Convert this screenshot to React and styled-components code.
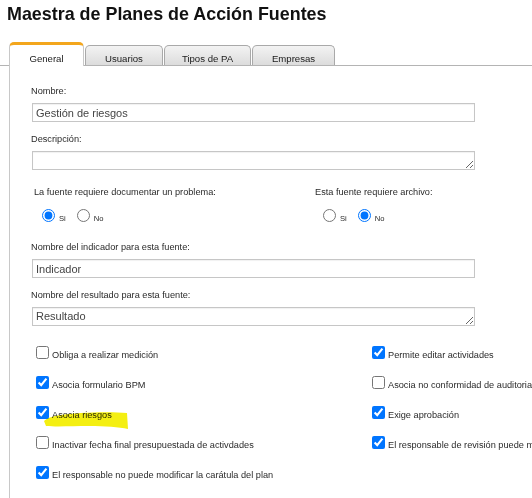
import React from 'react';
import styled, { createGlobalStyle } from 'styled-components';

const GlobalStyle = createGlobalStyle`
  html, body {
    margin: 0;
    padding: 0;
    background: #fff;
    overflow: hidden;
  }
  body {
    font-family: "Liberation Sans", Arial, sans-serif;
    color: #222;
  }
`;

const Page = styled.div`
  width: 720px;
`;

const Title = styled.h1`
  margin: 0;
  padding: 3px 7px 0;
  font-size: 17.9px;
  line-height: 22px;
  font-weight: bold;
  color: #111;
`;

const TabBar = styled.div`
  display: flex;
  align-items: flex-end;
  gap: 1px;
  margin-top: 17px;
  padding-left: 9px;
  border-bottom: 1px solid #b4b4b4;
`;

const Tab = styled.div`
  box-sizing: border-box;
  width: ${p => p.$w}px;
  height: ${p => (p.$active ? 24 : 20)}px;
  margin-bottom: ${p => (p.$active ? -1 : 0)}px;
  padding-top: ${p => (p.$active ? 8 : 7)}px;
  text-align: center;
  font-size: 9.6px;
  line-height: 11px;
  color: #1a1a1a;
  background: ${p => (p.$active ? '#fff' : 'linear-gradient(#f3f3f3, #dcdcdc)')};
  border: 1px solid ${p => (p.$active ? '#c8c8c8' : '#a9a9a9')};
  border-bottom: none;
  border-top: ${p => (p.$active ? '3px solid #f3a61d' : '1px solid #a9a9a9')};
  border-radius: 5px 5px 0 0;
`;

const Panel = styled.div`
  margin-left: 9px;
  border-left: 1px solid #c8c8c8;
  padding: 20px 0 80px 21px;
`;

const Field = styled.div`
  margin-bottom: ${p => p.$mb ?? 12}px;
`;

const Label = styled.div`
  font-size: 9.2px;
  line-height: 11px;
  color: #2a2a2a;
  margin-bottom: ${p => p.$mb ?? 6}px;
`;

const TextInput = styled.input`
  display: block;
  box-sizing: border-box;
  width: 443px;
  height: 19px;
  margin: 0 0 0 1px;
  padding: 0 3px;
  font-family: "Liberation Sans", Arial, sans-serif;
  font-size: 11px;
  color: #444;
  border: 1px solid #c6c6c6;
  box-shadow: inset 0 1px 1px rgba(0, 0, 0, 0.06);
  outline: none;
`;

const TextArea = styled.textarea`
  display: block;
  box-sizing: border-box;
  width: 443px;
  height: 19px;
  margin: 0 0 0 1px;
  padding: 1px 3px 0;
  font-family: "Liberation Sans", Arial, sans-serif;
  font-size: 11px;
  line-height: 14px;
  color: #444;
  border: 1px solid #c6c6c6;
  box-shadow: inset 0 1px 1px rgba(0, 0, 0, 0.06);
  outline: none;
  overflow: hidden;
`;

const RadioSection = styled.div`
  display: flex;
  margin: 17px 0 20px;
  padding-left: 3px;
`;

const RadioBlock = styled.div`
  width: ${p => p.$w || 'auto'};
`;

const RadioRow = styled.div`
  display: flex;
  align-items: flex-end;
  gap: 11px;
  padding-left: 8px;
  margin-top: 10px;
  height: 14px;
`;

const RadioOption = styled.label`
  display: flex;
  align-items: flex-end;
`;

const Radio = styled.input`
  width: 13px;
  height: 13px;
  margin: 0;
`;

const SmallText = styled.span`
  font-size: 7.6px;
  line-height: 9px;
  margin: 0 0 -1px 4px;
  color: #2a2a2a;
`;

const CheckGrid = styled.div`
  display: grid;
  grid-template-columns: 336px 1fr;
  grid-auto-rows: 30px;
  margin-top: 20px;
  padding-left: 5px;
`;

const CheckItem = styled.label`
  position: relative;
  display: flex;
  align-items: flex-start;
  white-space: nowrap;
`;

const Box = styled.input`
  width: 13px;
  height: 13px;
  margin: 0;
  flex: none;
`;

const CheckText = styled.span`
  font-size: 9.2px;
  line-height: 11px;
  margin: 4px 0 0 3px;
  color: #2a2a2a;
`;

// marker stroke drawn over "Asocia riesgos"
const Highlight = styled.svg`
  position: absolute;
  left: 7px;
  top: 1px;
  width: 86px;
  height: 23px;
  mix-blend-mode: multiply;
  pointer-events: none;
`;

const checks = [
  { text: 'Obliga a realizar medición', on: false },
  { text: 'Permite editar actividades', on: true },
  { text: 'Asocia formulario BPM', on: true },
  { text: 'Asocia no conformidad de auditoria', on: false },
  { text: 'Asocia riesgos', on: true, mark: true },
  { text: 'Exige aprobación', on: true },
  { text: 'Inactivar fecha final presupuestada de activdades', on: false },
  { text: 'El responsable de revisión puede modificar el plan', on: true },
  { text: 'El responsable no puede modificar la carátula del plan', on: true },
];

const tabs = [
  { name: 'General', w: 75, active: true },
  { name: 'Usuarios', w: 78 },
  { name: 'Tipos de PA', w: 87 },
  { name: 'Empresas', w: 83 },
];

const RadioGroup = ({ label, name, value, width }) => (
  <RadioBlock $w={width}>
    <Label $mb={0}>{label}</Label>
    <RadioRow>
      <RadioOption>
        <Radio type="radio" name={name} defaultChecked={value === 'si'} />
        <SmallText>Si</SmallText>
      </RadioOption>
      <RadioOption>
        <Radio type="radio" name={name} defaultChecked={value === 'no'} />
        <SmallText>No</SmallText>
      </RadioOption>
    </RadioRow>
  </RadioBlock>
);

export default function App() {
  return (
    <Page>
      <GlobalStyle />
      <Title>Maestra de Planes de Acción Fuentes</Title>
      <TabBar>
        {tabs.map(t => (
          <Tab key={t.name} $w={t.w} $active={t.active}>{t.name}</Tab>
        ))}
      </TabBar>
      <Panel>
        <Field>
          <Label>Nombre:</Label>
          <TextInput defaultValue="Gestión de riesgos" />
        </Field>
        <Field $mb={0}>
          <Label>Descripción:</Label>
          <TextArea rows={1} defaultValue="" />
        </Field>

        <RadioSection>
          <RadioGroup label="La fuente requiere documentar un problema:" name="problema" value="si" width="281px" />
          <RadioGroup label="Esta fuente requiere archivo:" name="archivo" value="no" />
        </RadioSection>

        <Field>
          <Label>Nombre del indicador para esta fuente:</Label>
          <TextInput defaultValue="Indicador" />
        </Field>
        <Field $mb={0}>
          <Label>Nombre del resultado para esta fuente:</Label>
          <TextArea rows={1} defaultValue="Resultado" />
        </Field>

        <CheckGrid>
          {checks.map(c => (
            <CheckItem key={c.text}>
              <Box type="checkbox" defaultChecked={c.on} />
              <CheckText>{c.text}</CheckText>
              {c.mark && (
                <Highlight viewBox="0 0 86 23">
                  <path
                    d="M1 14 C 6 9, 20 7, 38 6 C 56 5, 72 5, 84 6 L 85 22 C 76 20, 62 19, 46 19 C 30 19, 14 20, 3 19 Z"
                    fill="#f4ef12"
                  />
                </Highlight>
              )}
            </CheckItem>
          ))}
        </CheckGrid>
      </Panel>
    </Page>
  );
}
